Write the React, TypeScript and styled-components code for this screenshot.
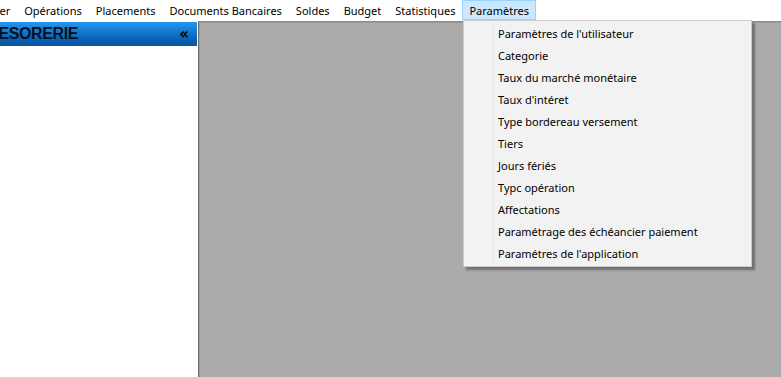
import styled, { createGlobalStyle } from 'styled-components';

const GlobalStyle = createGlobalStyle`
  html, body {
    margin: 0;
    padding: 0;
    background: #ffffff;
    overflow: hidden;
  }
`;

const menus = [
  'Fichier',
  'Opérations',
  'Placements',
  'Documents Bancaires',
  'Soldes',
  'Budget',
  'Statistiques',
  'Paramètres'
];

const params = [
  "Paramètres de l'utilisateur",
  'Categorie',
  'Taux du marché monétaire',
  "Taux d'intéret",
  'Type bordereau versement',
  'Tiers',
  'Jours fériés',
  'Typc opération',
  'Affectations',
  'Paramétrage des échéancier paiement',
  "Paramétres de l'application"
];

const RootStyled = styled.div`
  position: relative;
  width: 781px;
  height: 377px;
  display: flex;
  flex-direction: column;
  font-family: 'Segoe UI', 'Noto Sans', sans-serif;
  font-size: 11px;
  color: #000;
`;

const MenuBarStyled = styled.div`
  height: 21px;
  display: flex;
  align-items: stretch;
  overflow: hidden;
  background: #fff;
`;

const MenuListStyled = styled.div`
  display: flex;
  margin-left: -31px;
`;

const MenuItemStyled = styled.div<{ $open?: boolean }>`
  display: flex;
  align-items: center;
  padding: 0 6px;
  height: 20px;
  box-sizing: border-box;
  white-space: nowrap;
  background: ${(p) => (p.$open ? '#cce8ff' : 'transparent')};
  border: 1px solid ${(p) => (p.$open ? '#99d1ff' : 'transparent')};
`;

const BodyStyled = styled.div`
  flex: 1;
  display: flex;
`;

const SidebarStyled = styled.div`
  width: 197px;
  padding-top: 1px;
  background: #fff;
`;

const SideHeaderStyled = styled.div`
  height: 24px;
  display: flex;
  align-items: center;
  justify-content: space-between;
  overflow: hidden;
  background: linear-gradient(#2597f0, #0a62b4 70%, #07579f);
`;

const SideTitleStyled = styled.span`
  margin-left: -22px;
  font-family: 'Liberation Sans', Arial, sans-serif;
  font-weight: bold;
  font-size: 16px;
  letter-spacing: -0.4px;
  color: #04101c;
  white-space: nowrap;
`;

const CollapseStyled = styled.span`
  margin-right: 8px;
  font-family: 'DejaVu Sans', sans-serif;
  font-weight: bold;
  font-size: 15px;
  line-height: 1;
  color: #000;
`;

const WorkspaceStyled = styled.div`
  flex: 1;
  margin-left: 1px;
  background: #ababab;
  border-left: 1px solid #6e6e6e;
  border-top: 1px solid #8a8a8a;
  box-shadow: inset 1px 1px 0 #9c9c9c;
`;

const DropdownStyled = styled.div`
  position: absolute;
  left: 463px;
  top: 20px;
  width: 289px;
  height: 247px;
  box-sizing: border-box;
  padding: 1px 0;
  background: #f2f2f2;
  border: 1px solid #cccccc;
  box-shadow: 3px 3px 2px rgba(0, 0, 0, 0.35);
`;

const GutterStyled = styled.div`
  position: absolute;
  left: 29px;
  top: 2px;
  bottom: 2px;
  width: 1px;
  background: #e6e6e6;
`;

const DropItemStyled = styled.div`
  height: 22px;
  display: flex;
  align-items: center;
  padding-left: 34px;
  white-space: nowrap;
`;

const App = () => {
  return (
    <RootStyled>
      <GlobalStyle />
      <MenuBarStyled>
        <MenuListStyled>
          {menus.map((m) => (
            <MenuItemStyled key={m} $open={m === 'Paramètres'}>
              {m}
            </MenuItemStyled>
          ))}
        </MenuListStyled>
      </MenuBarStyled>
      <BodyStyled>
        <SidebarStyled>
          <SideHeaderStyled>
            <SideTitleStyled>TRESORERIE</SideTitleStyled>
            <CollapseStyled>«</CollapseStyled>
          </SideHeaderStyled>
        </SidebarStyled>
        <WorkspaceStyled />
      </BodyStyled>
      <DropdownStyled>
        <GutterStyled />
        {params.map((p) => (
          <DropItemStyled key={p}>{p}</DropItemStyled>
        ))}
      </DropdownStyled>
    </RootStyled>
  );
};

export default App;
